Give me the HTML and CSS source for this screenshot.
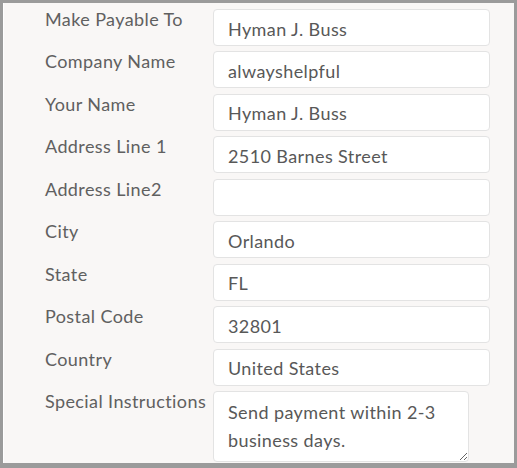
FILE: index.html
```html
<!DOCTYPE html>
<html>
<head>
    <title>Payment details</title>
    <link rel="stylesheet" href="styles.css">
</head>
<body>

<div class="frame">
    <form class="pay-form">
        <label class="pay-label">Make Payable To</label>
        <input class="pay-input" type="text" value="Hyman J. Buss">

        <label class="pay-label">Company Name</label>
        <input class="pay-input" type="text" value="alwayshelpful">

        <label class="pay-label">Your Name</label>
        <input class="pay-input" type="text" value="Hyman J. Buss">

        <label class="pay-label">Address Line 1</label>
        <input class="pay-input" type="text" value="2510 Barnes Street">

        <label class="pay-label">Address Line2</label>
        <input class="pay-input" type="text" value="">

        <label class="pay-label">City</label>
        <input class="pay-input" type="text" value="Orlando">

        <label class="pay-label">State</label>
        <input class="pay-input" type="text" value="FL">

        <label class="pay-label">Postal Code</label>
        <input class="pay-input" type="text" value="32801">

        <label class="pay-label">Country</label>
        <input class="pay-input" type="text" value="United States">

        <label class="pay-label">Special Instructions</label>
        <textarea class="pay-input pay-notes">Send payment within 2-3 business days.</textarea>
    </form>
</div>

</body>
</html>
```

FILE: styles.css
```css
html, body { margin: 0; padding: 0; }
body { background: #9b9b9b; }

.frame { width: 517px; height: 468px; box-sizing: border-box; overflow: hidden;
    border: 3px solid #9b9b9b; border-bottom-width: 5px; background: #f9f7f6;
    box-shadow: inset 1px 0 0 #fff; }

.pay-form { display: grid; grid-template-columns: 168px 277px; row-gap: 5.44px;
    padding: 6px 0 0 42px; font-family: Lato, "Open Sans", sans-serif; }

.pay-label { font-size: 18px; line-height: 20px; letter-spacing: 0.4px; color: #606060; }

.pay-input { height: 37px; box-sizing: border-box; margin: 0; padding: 2px 14px 0;
    font-family: Lato, "Open Sans", sans-serif; font-size: 18px; letter-spacing: 0.4px; color: #585858;
    background: #fff; border: 1px solid #e3e3e3; border-radius: 4px; outline: none; }

.pay-notes { width: 256px; height: 71px; padding: 6px 14px 0; line-height: 28px; resize: both; overflow: hidden; }
```
